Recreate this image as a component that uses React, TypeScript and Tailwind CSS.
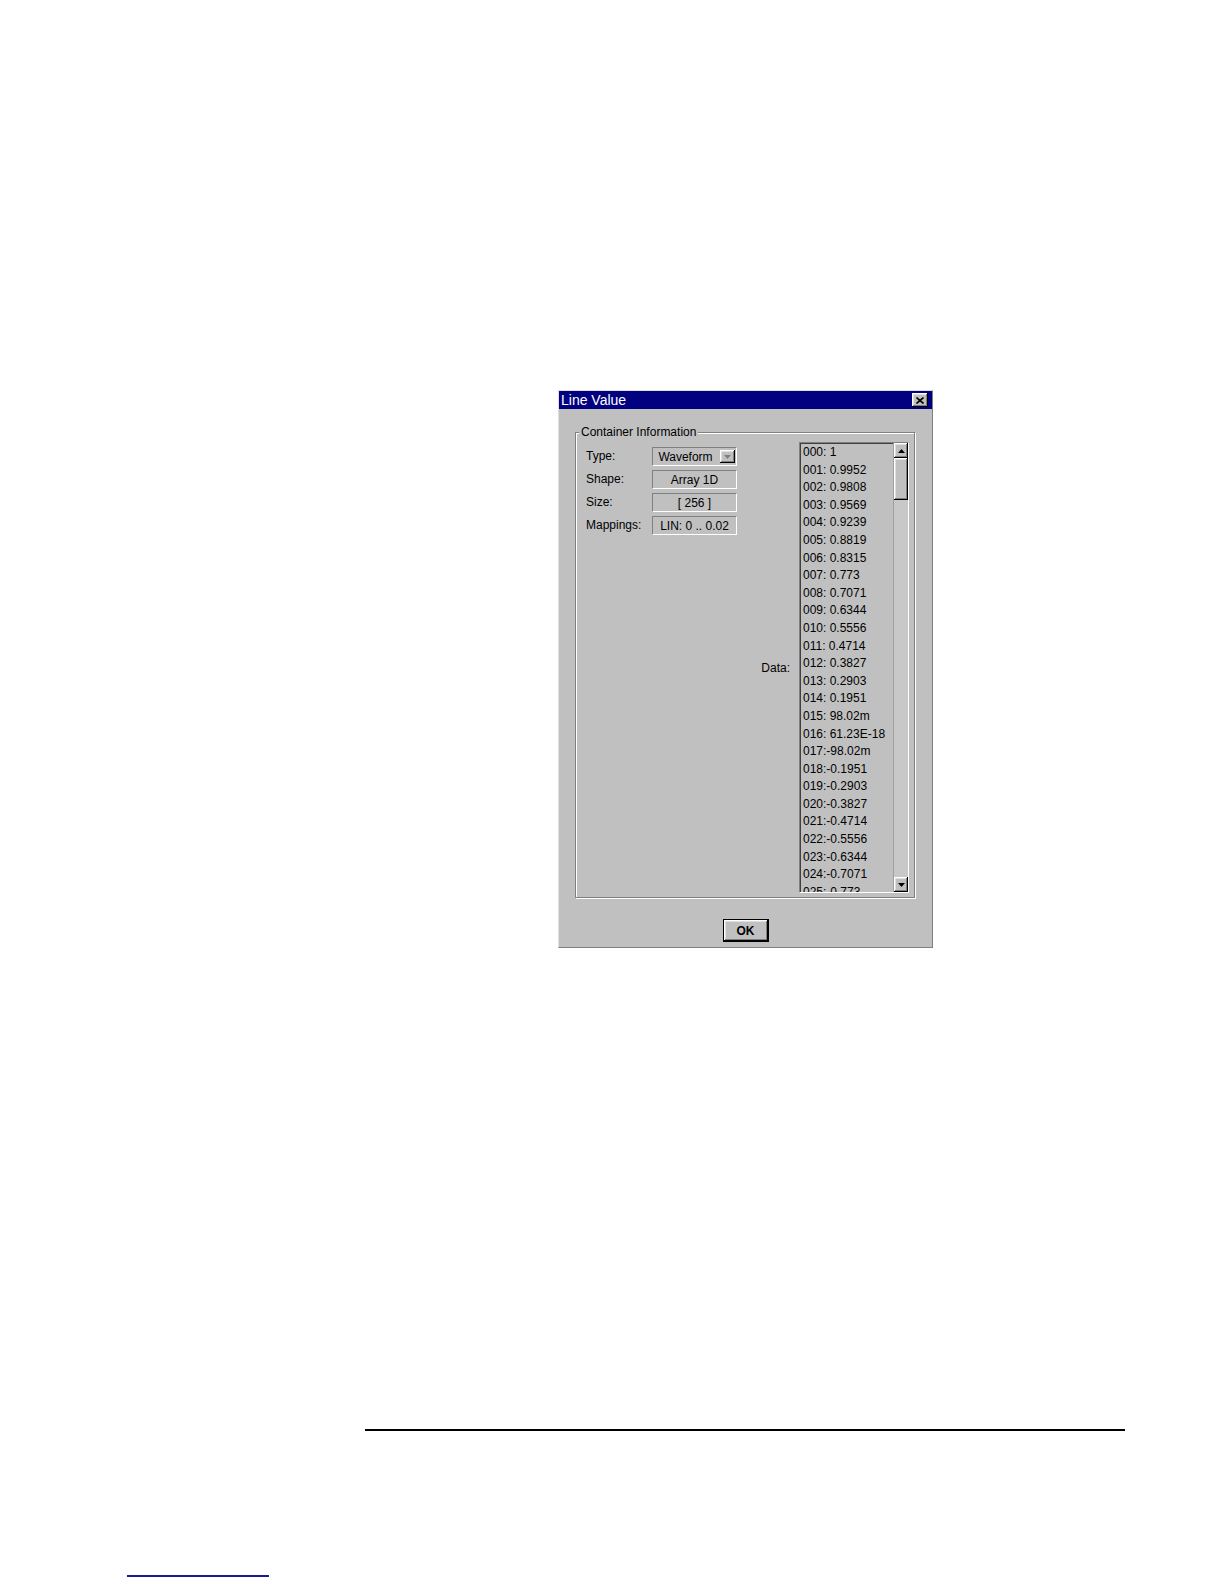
import React from 'react';

const raised =
  'bg-[#c0c0c0] shadow-[inset_-1px_-1px_0_#000,inset_1px_1px_0_#fff,inset_-2px_-2px_0_#808080,inset_2px_2px_0_#dfdfdf]';

const fields: { label: string; value: string; dropdown?: boolean }[] = [
  { label: 'Type:', value: 'Waveform', dropdown: true },
  { label: 'Shape:', value: 'Array 1D' },
  { label: 'Size:', value: '[ 256 ]' },
  { label: 'Mappings:', value: 'LIN: 0 .. 0.02' },
];

const data = [
  '000: 1',
  '001: 0.9952',
  '002: 0.9808',
  '003: 0.9569',
  '004: 0.9239',
  '005: 0.8819',
  '006: 0.8315',
  '007: 0.773',
  '008: 0.7071',
  '009: 0.6344',
  '010: 0.5556',
  '011: 0.4714',
  '012: 0.3827',
  '013: 0.2903',
  '014: 0.1951',
  '015: 98.02m',
  '016: 61.23E-18',
  '017:-98.02m',
  '018:-0.1951',
  '019:-0.2903',
  '020:-0.3827',
  '021:-0.4714',
  '022:-0.5556',
  '023:-0.6344',
  '024:-0.7071',
  '025:-0.773',
];

const Arrow: React.FC<{ up?: boolean; color?: string }> = ({ up, color = '#000' }) => (
  <svg width="7" height="4" viewBox="0 0 7 4">
    {up ? <polygon points="3.5,0 7,4 0,4" fill={color} /> : <polygon points="0,0 7,0 3.5,4" fill={color} />}
  </svg>
);

const App: React.FC = () => {
  return (
    <div className="w-[1224px] h-[1584px] bg-white flex flex-col pt-[390px] font-['Liberation_Sans',Arial,sans-serif] text-black overflow-hidden">
      {/* Dialog */}
      <div className="ml-[558px] w-[375px] flex flex-col bg-[#c0c0c0] border border-t-[#dfdfdf] border-l-[#dfdfdf] border-r-[#808080] border-b-[#808080]">
        {/* Title bar */}
        <div className="h-[18px] bg-[#000080] flex items-center justify-between pl-[2px] pr-[4px]">
          <span className="text-[14px] leading-[18px] text-white">Line Value</span>
          <div className={`w-[16px] h-[14px] flex items-center justify-center ${raised}`}>
            <svg width="8" height="7" viewBox="0 0 8 7">
              <path d="M0.5 0.5 L7.5 6.5 M7.5 0.5 L0.5 6.5" stroke="#000" strokeWidth="1.6" />
            </svg>
          </div>
        </div>

        {/* Group box */}
        <div className="relative mt-[23px] ml-[16px] w-[340px] h-[466px] border border-[#808080] shadow-[inset_1px_1px_0_#fff,1px_1px_0_#fff] flex pl-[10px] pr-[5px] pt-[9px] pb-[4px]">
          <span className="absolute left-[3px] -top-[8px] px-[2px] bg-[#c0c0c0] text-[12px] leading-[14px]">
            Container Information
          </span>

          <div className="mt-[5px] grid grid-cols-[66px_85px] auto-rows-[19px] gap-y-[4px] self-start">
            {fields.map((f) => (
              <React.Fragment key={f.label}>
                <span className="text-[12px] leading-[19px]">{f.label}</span>
                <div className="flex items-center border border-t-[#808080] border-l-[#808080] border-r-white border-b-white text-[12px]">
                  {f.dropdown ? (
                    <>
                      <span className="flex-1 text-center pr-[2px]">{f.value}</span>
                      <div className={`w-[15px] h-[13px] mr-[1px] flex items-center justify-center ${raised}`}>
                        <Arrow color="#808080" />
                      </div>
                    </>
                  ) : (
                    <span className="flex-1 text-center">{f.value}</span>
                  )}
                </div>
              </React.Fragment>
            ))}
          </div>

          <div className="ml-auto flex items-center gap-[9px]">
            <span className="text-[12px]">Data:</span>
            <div className="w-[110px] h-[451px] flex border border-t-[#808080] border-l-[#808080] border-r-white border-b-white">
              <div className="flex-1 overflow-hidden pl-[2px] border-t border-l border-[#404040]">
                {data.map((d) => (
                  <div key={d} className="text-[12px] leading-[17.6px] whitespace-nowrap">
                    {d}
                  </div>
                ))}
              </div>
              <div className="w-[15px] flex flex-col bg-[#c8c8c8] border-l border-[#a0a0a0]">
                <div className={`h-[15px] flex items-center justify-center ${raised}`}>
                  <Arrow up />
                </div>
                <div className={`h-[42px] ${raised}`} />
                <div className="flex-1" />
                <div className={`h-[15px] flex items-center justify-center ${raised}`}>
                  <Arrow />
                </div>
              </div>
            </div>
          </div>
        </div>

        {/* OK button */}
        <div className="flex justify-center mt-[21px] mb-[5px]">
          <button className="w-[46px] h-[23px] border border-black p-0">
            <div className={`w-full h-full flex items-center justify-center text-[12px] font-bold ${raised}`}>OK</div>
          </button>
        </div>
      </div>

      {/* Page rule */}
      <div className="mt-[481px] ml-[365px] w-[760px] h-[2px] bg-black" />

      {/* Footer link underline */}
      <div className="mt-[144px] ml-[127px] w-[142px] h-[2px] bg-[#1a1a8c]" />
    </div>
  );
};

export default App;
